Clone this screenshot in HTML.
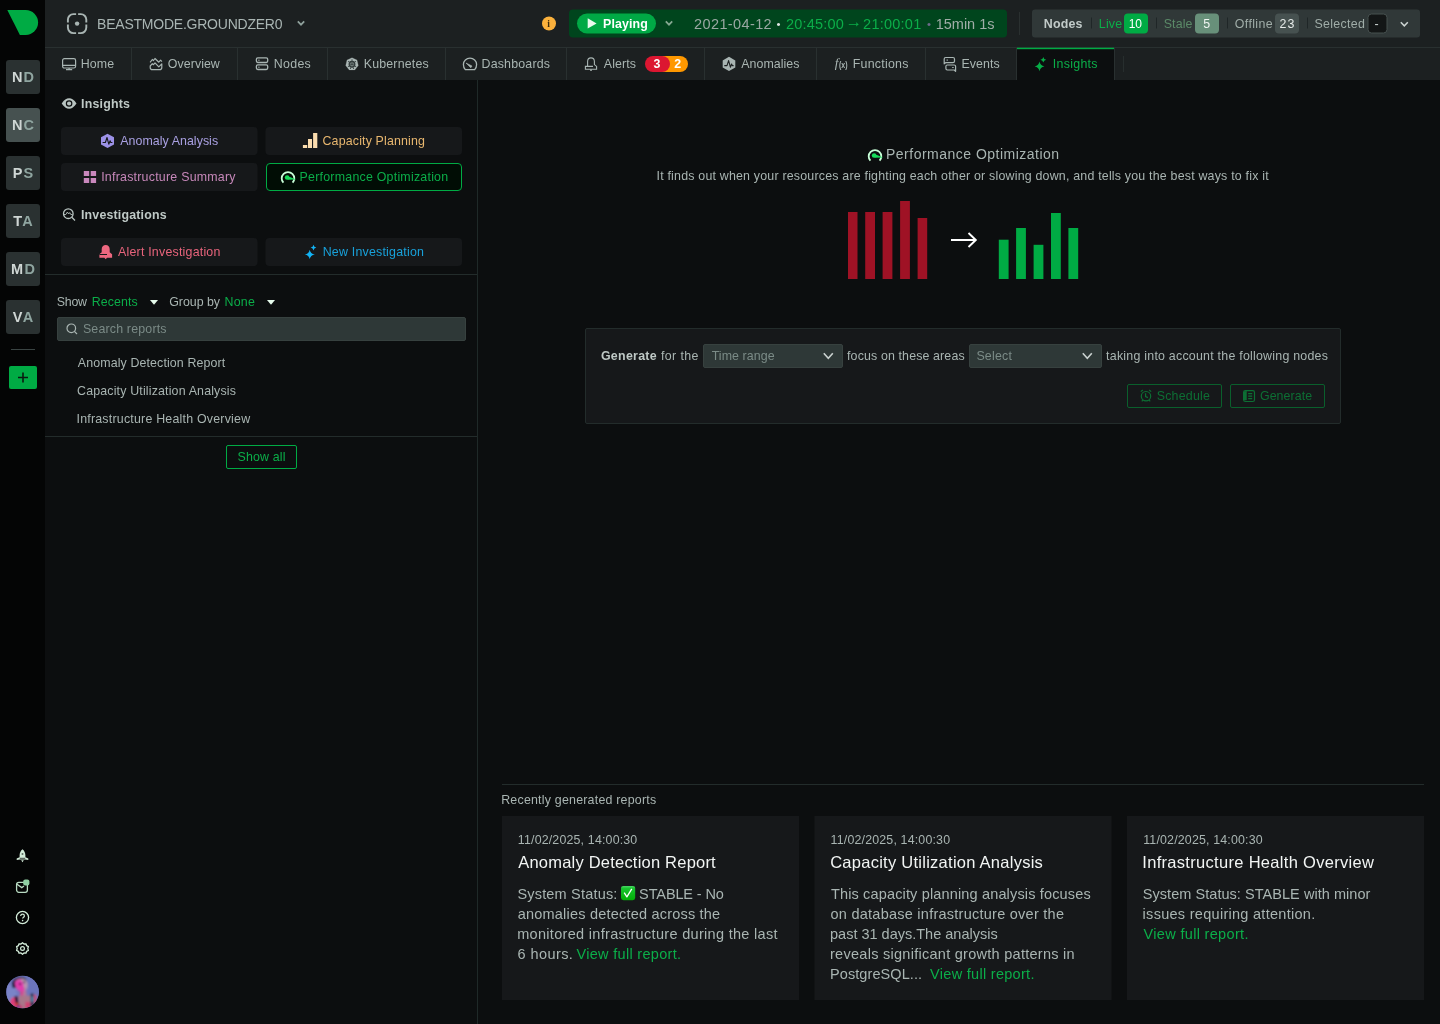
<!DOCTYPE html>
<html lang="en">
<head>
<meta charset="utf-8">
<title>Insights - Performance Optimization</title>
<style>
*{box-sizing:border-box;margin:0;padding:0}
html,body{width:1440px;height:1024px;overflow:hidden;background:#0c0e0f}
body{font-family:"Liberation Sans",sans-serif;color:#b0bcb9;font-size:12px;position:relative}
.b{position:absolute}
.t{position:absolute;white-space:pre;line-height:1}
svg{position:absolute;overflow:visible}
</style>
</head>
<body>
<div id="root" style="position:absolute;left:0;top:0;width:1440px;height:1024px;will-change:transform">
<!-- ===== left rail ===== -->
<div class="b" style="left:0;top:0;width:45px;height:1024px;background:#040505"></div>
<svg style="left:0;top:0" width="45" height="47" viewBox="0 0 45 47"><path d="M7.300 10.100H25.700A12.400 12.400 0 0 1 25.700 34.900H19.900Z" fill="#00ab44"/></svg>
<div class="b" style="left:6px;top:60px;width:34px;height:34px;border-radius:3px;background:#2a3131;text-align:center;font-weight:bold;font-size:14.5px;line-height:34px;letter-spacing:1.2px;padding-left:1.2px;color:#8fa5a0;white-space:nowrap"><span style="color:#cfd6d4">N</span>D</div>
<div class="b" style="left:6px;top:108px;width:34px;height:34px;border-radius:3px;background:#465150;text-align:center;font-weight:bold;font-size:14.5px;line-height:34px;letter-spacing:1.2px;padding-left:1.2px;color:#8fa5a0;white-space:nowrap"><span style="color:#cfd6d4">N</span>C</div>
<div class="b" style="left:6px;top:156px;width:34px;height:34px;border-radius:3px;background:#2a3131;text-align:center;font-weight:bold;font-size:14.5px;line-height:34px;letter-spacing:1.2px;padding-left:1.2px;color:#8fa5a0;white-space:nowrap"><span style="color:#cfd6d4">P</span>S</div>
<div class="b" style="left:6px;top:204px;width:34px;height:34px;border-radius:3px;background:#2a3131;text-align:center;font-weight:bold;font-size:14.5px;line-height:34px;letter-spacing:1.2px;padding-left:1.2px;color:#8fa5a0;white-space:nowrap"><span style="color:#cfd6d4">T</span>A</div>
<div class="b" style="left:6px;top:252px;width:34px;height:34px;border-radius:3px;background:#2a3131;text-align:center;font-weight:bold;font-size:14.5px;line-height:34px;letter-spacing:1.2px;padding-left:1.2px;color:#8fa5a0;white-space:nowrap"><span style="color:#cfd6d4">M</span>D</div>
<div class="b" style="left:6px;top:300px;width:34px;height:34px;border-radius:3px;background:#2a3131;text-align:center;font-weight:bold;font-size:14.5px;line-height:34px;letter-spacing:1.2px;padding-left:1.2px;color:#8fa5a0;white-space:nowrap"><span style="color:#cfd6d4">V</span>A</div>
<div class="b" style="left:11px;top:349px;width:24px;height:1px;background:#3a4443"></div>
<div class="b" style="left:9px;top:366px;width:28px;height:23px;border-radius:2px;background:#00ab44"></div>
<svg style="left:9px;top:366px" width="28" height="23" viewBox="0 0 28 23"><path d="M14 6.5V16.5M9 11.5H19" stroke="#0a1a10" stroke-width="1.6" fill="none"/></svg>
<!-- rail bottom icons -->
<svg style="left:14px;top:848px" width="17" height="16" viewBox="0 0 17 16"><path d="M8.5 1.3C10.6 3 11.4 5.2 11.4 7.6V9.3L14.3 10.6V12L11.2 11.6H5.8L2.7 12V10.6L5.6 9.3V7.6C5.6 5.2 6.4 3 8.5 1.3Z M7.2 12.3H9.8L8.5 14.2Z" fill="#d3ecd9"/><circle cx="8.5" cy="6" r="1" fill="#5a6a60"/><path d="M5.8 10.3H11.2" stroke="#040505" stroke-width=".7"/></svg>
<svg style="left:15px;top:878px" width="16" height="16" viewBox="0 0 16 16"><rect x="1.6" y="4.3" width="10.8" height="10" rx="2.2" fill="none" stroke="#b9dcc3" stroke-width="1.3"/><path d="M2 6.2L6.8 9.6L9 8" fill="none" stroke="#b9dcc3" stroke-width="1.3"/><rect x="8.2" y="1.4" width="6.2" height="6" rx="2" fill="#8fd0a3"/></svg>
<svg style="left:15px;top:910px" width="15" height="15" viewBox="0 0 15 15"><circle cx="7.5" cy="7.5" r="6.1" fill="none" stroke="#d3ecd9" stroke-width="1.3"/><path d="M5.7 6.1C5.7 4.9 6.5 4.2 7.6 4.2S9.4 4.9 9.4 5.9C9.4 7.2 7.6 7.2 7.6 8.6" fill="none" stroke="#d3ecd9" stroke-width="1.2"/><circle cx="7.6" cy="10.6" r=".8" fill="#d3ecd9"/></svg>
<svg style="left:15px;top:941px" width="15" height="15" viewBox="0 0 15 15"><path d="M7.5 1.2L9 2.5L11 2.3L11.6 4.2L13.4 5.1L12.8 7L13.4 8.9L11.6 9.8L11 11.7L9 11.5L7.5 12.8L6 11.5L4 11.7L3.4 9.8L1.6 8.9L2.2 7L1.6 5.1L3.4 4.2L4 2.3L6 2.5Z" transform="translate(0 .5)" fill="none" stroke="#d3ecd9" stroke-width="1.3" stroke-linejoin="round"/><circle cx="7.5" cy="7.5" r="1.9" fill="none" stroke="#d3ecd9" stroke-width="1.2"/></svg>
<!-- avatar -->
<svg style="left:6px;top:975px" width="34" height="34" viewBox="0 0 34 34"><defs><clipPath id="av"><circle cx="16.550" cy="16.950" r="16.300"/></clipPath><filter id="avb" x="-20%" y="-20%" width="140%" height="140%"><feGaussianBlur stdDeviation="1.1"/></filter></defs><g clip-path="url(#av)"><rect width="34" height="34" fill="#6f77be"/><g filter="url(#avb)"><path d="M0 8L9 12L12 22L3 28L0 30Z" fill="#7a84c8"/><path d="M19 0H34V22L24 18L21 8Z" fill="#6c74bc"/><path d="M6.200 12.800C5.800 8 6.800 5 10.200 3C13 1.600 17 1.800 19.500 3C20.600 4.500 20.600 6.500 20.300 7.600L17.300 5.200L10.500 6.500L10.200 13Z" fill="#1f1838"/><path d="M9.200 7C10 4.500 13 3.400 16 3.600C19.500 4 21.600 6.500 21.700 10C21.800 13.500 20 16.600 16.500 16.800C12.500 17 9 13 9.200 7Z" fill="#b795ae"/><path d="M9.200 7C10 5 12.500 4.200 15 4.500L17.500 9L18.500 16.500C16 17.500 12.500 16.500 10.500 13.500C9.300 11.500 9 9 9.200 7Z" fill="#e03cae"/><circle cx="14" cy="9.100" r="1.050" fill="#2a1838"/><circle cx="18.200" cy="7.200" r=".95" fill="#2c2040"/><path d="M17.500 13.800L19.300 13.300L19 14.600Z" fill="#a03070"/><path d="M14 16L20.300 16.300L20.300 21.500H14Z" fill="#cc4c92"/><path d="M17.500 16.500H20.300V21.500H17.500Z" fill="#b0809c"/><path d="M3.900 30C3.500 25 6 22 9.100 21.800L12 21.500L13 34H5Z" fill="#de3f7a"/><path d="M12.800 20.600H24.700V34H12.800Z" fill="#a9788a"/><path d="M19.500 26.500L24.700 27.500V34H19Z" fill="#cf4272"/><path d="M13 29L16.500 31V34H13Z" fill="#c04a78"/><path d="M8.400 21.300L11.200 20.800L13.400 32.500L10.200 32Z" fill="#1a1430"/><path d="M9.300 28L12 27.600L13.200 32.600L10.200 32.200Z" fill="#d8431f"/><path d="M10.600 30.600L12.600 30.300L13.200 32.700L11.200 32.600Z" fill="#4834c4"/><path d="M24.700 18.200L27.700 18.800V30.700L24.700 32Z" fill="#1a2a44"/><path d="M25.500 21.200L27 21.500V26.800L25.500 27Z" fill="#2f9dc0"/><path d="M27.700 19L30.700 20.500V27.700L27.700 29Z" fill="#c2527f"/></g></g></svg>
<!-- ===== header ===== -->
<div class="b" style="left:45px;top:0;width:1395px;height:80px;background:#1c2021"></div>
<div class="b" style="left:45px;top:47px;width:1395px;height:1px;background:#293030"></div>
<!-- workspace icon -->
<svg style="left:66px;top:13px" width="22" height="22" viewBox="0 0 22 22"><rect x="1.9" y="1.1" width="18.4" height="19" rx="5.5" fill="none" stroke="#a9b5b3" stroke-width="1.9"/><path d="M11.1 0V22M0 10.6H22" stroke="#1c2021" stroke-width="2"/><circle cx="11.1" cy="10.6" r="2.2" fill="#a9b5b3"/></svg>
<svg style="left:297px;top:20px" width="8" height="7" viewBox="0 0 8 7"><path d="M.8 1.3L4 4.7L7.2 1.3" fill="none" stroke="#8fa19c" stroke-width="1.7"/></svg>
<!-- info -->
<svg style="left:541px;top:15px" width="16" height="17"><rect x="1" y="1.5" width="14" height="14" rx="7" fill="#fbb13c"/></svg>
<!-- play bar -->
<svg style="left:568px;top:8px" width="440" height="31"><rect x="1" y="1.5" width="438" height="28" rx="4" fill="#00451d"/></svg>
<svg style="left:576px;top:12px" width="81" height="23"><rect x="1" y="1.5" width="79" height="20" rx="10" fill="#00a945"/></svg>
<svg style="left:587px;top:18px" width="11" height="11" viewBox="0 0 11 11"><path d="M.7 .3L9.6 5.4L.7 10.5Z" fill="#e9fbee"/></svg>
<svg style="left:665px;top:20px" width="8" height="7" viewBox="0 0 8 7"><path d="M.8 1.3L4 4.7L7.2 1.3" fill="none" stroke="#86a892" stroke-width="1.7"/></svg>
<div class="b" style="left:1019px;top:12px;width:1px;height:23px;background:#2a3030"></div>
<!-- nodes bar -->
<svg style="left:1031px;top:8px" width="390" height="31"><rect x="1" y="1.5" width="388" height="28" rx="3" fill="#303838"/></svg>
<svg style="left:1090px;top:16px" width="3" height="14"><rect x="1" y="1.5" width="1" height="11" rx="0" fill="#1f2627"/></svg>
<svg style="left:1155px;top:16px" width="3" height="14"><rect x="1" y="1.5" width="1" height="11" rx="0" fill="#1f2627"/></svg>
<svg style="left:1226px;top:16px" width="3" height="14"><rect x="1" y="1.5" width="1" height="11" rx="0" fill="#1f2627"/></svg>
<svg style="left:1306px;top:16px" width="3" height="14"><rect x="1" y="1.5" width="1" height="11" rx="0" fill="#1f2627"/></svg>
<svg style="left:1123px;top:12px" width="26" height="23"><rect x="1" y="1.5" width="24" height="20" rx="4" fill="#00ab44"/></svg>
<svg style="left:1194px;top:12px" width="26" height="23"><rect x="1" y="1.5" width="24" height="20" rx="4" fill="#68907a"/></svg>
<svg style="left:1274px;top:12px" width="26" height="23"><rect x="1" y="1.5" width="24" height="20" rx="4" fill="#465150"/></svg>
<svg style="left:1366px;top:12px" width="23" height="23"><rect x="2" y="2" width="19" height="19" rx="3.5" fill="#131616" stroke="#46504f"/></svg>
<svg style="left:1400px;top:21px" width="9" height="7" viewBox="0 0 9 7"><path d="M.8 1.2L4.3 4.8L7.8 1.2" fill="none" stroke="#cdd5d3" stroke-width="1.5"/></svg>
<!-- ===== tabs ===== -->
<div class="b" style="left:131px;top:48px;width:1px;height:32px;background:#293030"></div>
<div class="b" style="left:237px;top:48px;width:1px;height:32px;background:#293030"></div>
<div class="b" style="left:327px;top:48px;width:1px;height:32px;background:#293030"></div>
<div class="b" style="left:445px;top:48px;width:1px;height:32px;background:#293030"></div>
<div class="b" style="left:566px;top:48px;width:1px;height:32px;background:#293030"></div>
<div class="b" style="left:704px;top:48px;width:1px;height:32px;background:#293030"></div>
<div class="b" style="left:816px;top:48px;width:1px;height:32px;background:#293030"></div>
<div class="b" style="left:925px;top:48px;width:1px;height:32px;background:#293030"></div>
<div class="b" style="left:1016px;top:48px;width:99px;height:32px;background:#0c0e0f;border-left:1px solid #293030;border-right:1px solid #293030"></div>
<svg style="left:1016px;top:46px" width="99" height="5"><rect x="1" y="1.7" width="97" height="1.5" rx="0" fill="#00ab44"/></svg>
<div class="b" style="left:1123px;top:56px;width:1px;height:16px;background:#272e2e"></div>
<!-- alerts pill -->
<div class="b" style="left:655px;top:56px;width:33px;height:16px;border-radius:8px;background:#ff9800"></div>
<div class="b" style="left:645px;top:56px;width:25px;height:16px;border-radius:8px;background:#dc1631"></div>
<!-- ===== left panel ===== -->
<div class="b" style="left:477px;top:80px;width:1px;height:944px;background:#1f2928"></div>
<svg style="left:60px;top:126px" width="199" height="30"><rect x="1" y="1" width="196.5" height="28" rx="4" fill="#16181a"/></svg>
<svg style="left:264px;top:126px" width="199" height="30"><rect x="1.5" y="1" width="196.5" height="28" rx="4" fill="#16181a"/></svg>
<svg style="left:60px;top:162px" width="199" height="30"><rect x="1" y="1" width="196.5" height="28" rx="4" fill="#16181a"/></svg>
<svg style="left:264px;top:162px" width="199" height="30"><rect x="2.500" y="1.500" width="195" height="27" rx="3.500" fill="#010d05" stroke="#00ab44"/></svg>
<svg style="left:60px;top:237px" width="199" height="30"><rect x="1" y="1" width="196.5" height="28" rx="4" fill="#16181a"/></svg>
<svg style="left:264px;top:237px" width="199" height="30"><rect x="1.5" y="1" width="196.5" height="28" rx="4" fill="#16181a"/></svg>
<div class="b" style="left:45px;top:274px;width:432px;height:1px;background:#232c2b"></div>
<svg style="left:149.5px;top:299.5px" width="8" height="5" viewBox="0 0 8 5"><path d="M0 0H8L4 4.7Z" fill="#e6fbec"/></svg>
<svg style="left:266.5px;top:299.5px" width="8" height="5" viewBox="0 0 8 5"><path d="M0 0H8L4 4.7Z" fill="#e6fbec"/></svg>
<div class="b" style="left:57px;top:317px;width:409px;height:24px;border-radius:2px;background:#2e3837;border:1px solid #37413f"></div>
<svg style="left:66px;top:323px" width="12" height="12" viewBox="0 0 12 12"><circle cx="5.3" cy="5.3" r="4.3" fill="none" stroke="#aab6b3" stroke-width="1.2"/><path d="M8.4 8.4L11 11" stroke="#aab6b3" stroke-width="1.2"/></svg>
<div class="b" style="left:45px;top:436px;width:432px;height:1px;background:#232c2b"></div>
<div class="b" style="left:226px;top:445px;width:71px;height:24px;border-radius:2px;border:1px solid #00ab44"></div>
<!-- ===== main ===== -->
<svg style="left:840px;top:195px" width="250" height="90" viewBox="840 195 250 90">
<g fill="#9f1225"><rect x="848" y="212" width="9.500" height="67"/><rect x="865.2" y="212" width="9.8" height="67"/><rect x="882.6" y="212" width="9.8" height="67"/><rect x="900.1" y="201" width="9.8" height="78"/><rect x="917.600" y="218" width="9.600" height="61"/></g>
<path d="M951 240H975.5M968.5 233L975.8 240L968.5 247" fill="none" stroke="#ffffff" stroke-width="1.9"/>
<g fill="#00ab44"><rect x="998.8" y="239.7" width="9.8" height="39.3"/><rect x="1016.1" y="228" width="9.8" height="51"/><rect x="1033.6" y="244.8" width="9.8" height="34.2"/><rect x="1051" y="213" width="9.8" height="66"/><rect x="1068.4" y="228" width="9.8" height="51"/></g>
</svg>
<div class="b" style="left:585px;top:328px;width:756px;height:96px;border-radius:2px;background:#16181a;border:1px solid #232c2b"></div>
<div class="b" style="left:703px;top:344px;width:140px;height:24px;border-radius:2px;background:#2e3837;border:1px solid #37413f"></div>
<div class="b" style="left:969px;top:344px;width:133px;height:24px;border-radius:2px;background:#2e3837;border:1px solid #37413f"></div>
<svg style="left:823px;top:352px" width="11" height="8" viewBox="0 0 11 8"><path d="M.8 1.2L5.3 6.2L9.8 1.2" fill="none" stroke="#c9d1cf" stroke-width="1.6"/></svg>
<svg style="left:1082px;top:352px" width="11" height="8" viewBox="0 0 11 8"><path d="M.8 1.2L5.3 6.2L9.8 1.2" fill="none" stroke="#c9d1cf" stroke-width="1.6"/></svg>
<div class="b" style="left:1127px;top:384px;width:95px;height:24px;border-radius:2px;border:1px solid #0a5f2c"></div>
<div class="b" style="left:1230px;top:384px;width:95px;height:24px;border-radius:2px;border:1px solid #0a5f2c"></div>
<div class="b" style="left:502px;top:784px;width:922px;height:1px;background:#232c2b"></div>
<div class="b" style="left:502px;top:816px;width:297px;height:184px;background:#16181a"></div>
<svg style="left:813px;top:815px" width="300" height="186"><rect x="1.5" y="1" width="297" height="184" rx="0" fill="#16181a"/></svg>
<div class="b" style="left:1127px;top:816px;width:297px;height:184px;background:#16181a"></div>
<!-- check emoji -->
<svg style="left:621px;top:885.8px" width="14.2" height="14.3" viewBox="0 0 14.2 14.3"><defs><linearGradient id="ck" x1="0" y1="0" x2="0" y2="1"><stop offset="0" stop-color="#4bd866"/><stop offset=".18" stop-color="#17c42e"/><stop offset="1" stop-color="#02ad06"/></linearGradient></defs><rect x="0" y="0" width="14.2" height="14.3" rx="2.500" fill="url(#ck)"/><path d="M3.200 6.700L5.900 10.900L10.800 2.800" fill="none" stroke="#ffffff" stroke-width="1.300" stroke-linejoin="round"/></svg>
<!-- ===== tab icons ===== -->
<svg style="left:62px;top:58px" width="15" height="13" viewBox="0 0 15 13" fill="none" stroke="#a9b5b3" stroke-width="1.2"><rect x=".6" y=".6" width="13" height="9.4" rx="1.8"/><path d="M.6 7.4H13.6M7.1 10V11.5M4 11.7H10.2"/></svg>
<svg style="left:149px;top:57px" width="15" height="14" viewBox="149 57 15 14" fill="none" stroke="#a9b5b3" stroke-width="1.2" stroke-linejoin="round"><path d="M150.100 62.300L152.300 59.500L153.500 60.500L155 58.500L158.800 62.200L160.600 60.200L161.900 61.600"/><path d="M150.200 66V67.400C150.200 68.800 151.200 69.600 152.500 69.600H159.500C160.800 69.600 161.800 68.800 161.800 67.400V63.800L158.800 66.800L155 62.900L153.500 64.700L152.300 63.700L150.200 66Z"/></svg>
<svg style="left:255px;top:57px" width="14" height="14" viewBox="255 57 14 14" fill="none" stroke="#a9b5b3" stroke-width="1.3"><rect x="256.4" y="57.8" width="11.3" height="4.7" rx="1.4"/><rect x="256.4" y="64.8" width="11.3" height="4.7" rx="1.4"/><path d="M258.2 60.2H259.6M258.2 67.2H259.6" stroke-width="1"/></svg>
<svg style="left:345px;top:57px" width="14" height="14" viewBox="345 57 14 14"><path d="M352 57.700L357 60.100L358.300 65.500L354.800 69.900H349.200L345.700 65.500L347 60.100Z" fill="#a9b5b3" stroke="#a9b5b3" stroke-width=".2" stroke-linejoin="round"/><circle cx="352" cy="64.300" r="2.800" fill="#707c7a" stroke="#323b3b" stroke-width="1.300"/><path d="M350.600 64.600Q352 63.300 353.400 64.600" fill="none" stroke="#2b3333" stroke-width="1"/><path d="M352 59.300V61.300M348 61.200L349.700 62.500M356 61.200L354.300 62.500M347.800 66.900L349.400 66M356.200 66.900L354.600 66M350.300 69L351 67.300M353.700 69L353 67.300" stroke="#3a4444" stroke-width=".9"/></svg>
<svg style="left:462px;top:57px" width="16" height="14" viewBox="462 57 16 14" fill="none" stroke="#a9b5b3" stroke-width="1.3"><path d="M465.3 69.6H474.7C475.9 68.4 476.6 66.5 476.6 64.6C476.6 61 473.6 58.2 470 58.2S463.4 61 463.4 64.6C463.4 66.5 464.1 68.4 465.3 69.6Z"/><path d="M466 63L472 66L470.8 67.8Z" fill="#a9b5b3" stroke-width=".6"/></svg>
<svg style="left:584px;top:56px" width="14" height="16" viewBox="584 56 14 16" fill="none" stroke="#a9b5b3" stroke-width="1.1"><path d="M587.6 65.8V61.6C587.6 59.4 589 57.9 591 57.9S594.4 59.4 594.4 61.6V64.6L596.6 66.4V69.3H585.4V66.4H593"/><path d="M590 70.2H592" stroke-width="1.3"/></svg>
<svg style="left:722px;top:56px" width="14" height="16" viewBox="722 56 14 16"><path d="M729 56.8L735.3 60.4V67.5L729 71.1L722.7 67.5V60.4Z" fill="#a9b5b3"/><path d="M724.3 65.6H727L728.6 60.6L730.4 67.2L731.6 64L732.3 65.6H733.6" fill="none" stroke="#1c2021" stroke-width="1.1" stroke-linejoin="round"/></svg>
<svg style="left:943px;top:56px" width="14" height="16" viewBox="943 56 14 16" fill="none" stroke="#a9b5b3" stroke-width="1.2" stroke-linejoin="round"><path d="M944.2 63.8V58.9C944.2 58 944.9 57.5 945.7 57.5H953C953.9 57.5 954.5 58.1 954.5 58.9V61.3C954.5 62.2 953.9 62.7 953 62.7H945.6Z"/><path d="M955.6 71.3V66.3C955.6 65.5 955 65 954.2 65H947.3C946.4 65 945.9 65.6 945.9 66.3V68.6C945.9 69.5 946.5 70 947.3 70H954.2Z"/><path d="M946.5 60.1H948M952.2 67.5H953.7" stroke-width="1"/></svg>
<svg style="left:1034px;top:56px" width="14" height="16" viewBox="1034 56 14 16" fill="#06ad47"><path d="M1039.5 61.6Q1040.2 65.7 1044.4 66.4Q1040.2 67.100 1039.500 71.2Q1038.8 67.1 1034.7 66.4Q1038.8 65.7 1039.5 61.6Z"/><path d="M1043.3 56.900Q1043.700 59.3 1046.200 59.700Q1043.700 60.100 1043.300 62.500Q1042.900 60.100 1040.400 59.700Q1042.900 59.300 1043.300 56.900Z"/></svg>
<!-- ===== left panel icons ===== -->
<svg style="left:61px;top:98px" width="16" height="11" viewBox="61 98 16 11"><path d="M61.700 103.500C64 99.800 66.600 98.300 69.100 98.300S74.200 99.800 76.500 103.500C74.200 107.200 71.600 108.700 69.100 108.700S64 107.200 61.700 103.500Z" fill="#b8c3c0"/><circle cx="69.100" cy="103.500" r="2.700" fill="none" stroke="#0c0e0f" stroke-width="1.200"/></svg>
<svg style="left:101px;top:133px" width="14" height="16" viewBox="101 133 14 16"><path d="M107.500 133.700L114 137.300V144.400L107.500 148L101 144.400V137.300Z" fill="#9d92e8"/><path d="M102.600 142.500H105.400L107 137.500L108.800 144.200L110.100 140.800L110.800 142.500H112.400" fill="none" stroke="#16191a" stroke-width="1.100" stroke-linejoin="round"/></svg>
<svg style="left:302px;top:133px" width="16" height="16" viewBox="302 133 16 16" fill="#fbdcae"><rect x="302.900" y="145" width="4.300" height="3"/><rect x="308" y="139" width="4" height="9"/><rect x="313.100" y="133" width="4.200" height="15"/></svg>
<svg style="left:83px;top:171px" width="14" height="13" viewBox="83 171 14 13" fill="#c987bc"><rect x="83.800" y="171" width="5.400" height="5"/><rect x="90.700" y="171" width="5.400" height="5"/><rect x="83.800" y="178" width="5.400" height="5"/><rect x="90.700" y="178" width="5.400" height="5"/></svg>
<svg style="left:280px;top:170px" width="17" height="14" viewBox="280 170 17 14"><path d="M283.400 182.700A6.300 6.300 0 1 1 292.600 182.700" fill="none" stroke="#c8ffd8" stroke-width="1.800"/><circle cx="287.100" cy="177.500" r="2.300" fill="#17dd5b"/><path d="M288 176.200L296.200 179.500L287.500 179.800Z" fill="#17dd5b"/></svg>
<svg style="left:62px;top:208px" width="14" height="14" viewBox="62 208 14 14" fill="none" stroke="#b8c3c0" stroke-width="1.300"><circle cx="68.300" cy="213.700" r="4.800"/><path d="M71.800 217.300L75 220.500"/><path d="M64 214.500H65.800L67.400 212L68.600 214L69.700 212.600L70.800 214.500H72.500" stroke-width=".9" stroke-linejoin="round"/></svg>
<svg style="left:99px;top:244px" width="14" height="16" viewBox="99 244 14 16"><path d="M105.700 245C108.200 245 109.700 246.800 109.700 249.300V252.300L112.100 254.300V257.700H107L105.700 259.200L104.400 257.700H99.400V254.300L101.700 252.300V249.300C101.700 246.800 103.200 245 105.700 245Z" fill="#ee6880"/><path d="M99.400 254.500H107" stroke="#16191a" stroke-width="1"/></svg>
<svg style="left:304px;top:244px" width="14" height="16" viewBox="304 244 14 16" fill="#12b3f5"><path d="M309.700 249.700Q310.400 253.700 314.900 254.400Q310.400 255.100 309.700 259.100Q309 255.100 304.800 254.400Q309 253.700 309.700 249.700Z"/><path d="M313.500 244.800Q313.900 247.200 316.300 247.600Q313.900 248 313.500 250.400Q313.100 248 310.700 247.600Q313.100 247.200 313.500 244.800Z"/></svg>
<!-- ===== main icons ===== -->
<svg style="left:867px;top:147.500px" width="17" height="14" viewBox="280 170 17 14"><path d="M283.400 182.700A6.300 6.300 0 1 1 292.600 182.700" fill="none" stroke="#c8ffd8" stroke-width="1.800"/><circle cx="287.100" cy="177.500" r="2.300" fill="#17dd5b"/><path d="M288 176.200L296.200 179.500L287.500 179.800Z" fill="#17dd5b"/></svg>
<svg style="left:1140px;top:389px" width="13" height="14" viewBox="1140 389 13 14" fill="none" stroke="#0d6f34" stroke-width="1.200"><circle cx="1146" cy="396.200" r="4.700"/><path d="M1145.600 393.300V396.500L1147.900 397.600M1140.800 391.600L1142.800 390M1151.200 391.600L1149.200 390M1142.800 400.200L1141.800 401.400M1149.200 400.200L1150.200 401.400"/></svg>
<svg style="left:1243px;top:390px" width="13" height="13" viewBox="1243 390 13 13" fill="none" stroke="#0d6f34" stroke-width="1.200"><rect x="1243.600" y="390.600" width="10.900" height="10.900" rx="1.800"/><path d="M1243.600 392V400H1246.400V391Z" fill="#0d6f34" stroke-width=".6"/><path d="M1248.200 393.700H1252.200M1248.200 396.100H1252.200M1248.200 398.600H1252.200"/></svg>

<span class="t" style="left:97.10px;top:17.00px;font-size:14px;color:#a9b5b3;letter-spacing:-0.232px;">BEASTMODE.GROUNDZER0</span>
<span class="t" style="left:603.09px;top:17.50px;font-size:12.4px;color:#ffffff;font-weight:700;letter-spacing:0.096px;">Playing</span>
<span class="t" style="left:694.12px;top:16.70px;font-size:14.5px;color:#9aa8a3;letter-spacing:0.376px;">2021-04-12</span>
<span class="t" style="left:776.61px;top:19.00px;font-size:11.5px;color:#dfe5e3;">•</span>
<span class="t" style="left:786.12px;top:16.70px;font-size:14.5px;color:#0bae49;letter-spacing:0.169px;">20:45:00</span>
<span class="t" style="left:845.52px;top:13.00px;font-size:16.5px;color:#0bae49;">→</span>
<span class="t" style="left:863.12px;top:16.70px;font-size:14.5px;color:#0bae49;letter-spacing:0.240px;">21:00:01</span>
<span class="t" style="left:927.11px;top:19.00px;font-size:11.5px;color:#6f6a8c;">•</span>
<span class="t" style="left:935.70px;top:16.70px;font-size:14.5px;color:#a0ada8;">15min 1s</span>
<span class="t" style="left:1043.79px;top:17.50px;font-size:12.4px;color:#c2cbc9;font-weight:700;letter-spacing:0.186px;">Nodes</span>
<span class="t" style="left:1098.80px;top:17.50px;font-size:12.4px;color:#0bae49;letter-spacing:0.200px;">Live</span>
<span class="t" style="left:1128.85px;top:17.50px;font-size:12px;color:#ffffff;letter-spacing:-0.150px;">10</span>
<span class="t" style="left:1163.69px;top:17.50px;font-size:12.4px;color:#5b8a68;letter-spacing:0.134px;">Stale</span>
<span class="t" style="left:1203.19px;top:17.50px;font-size:12.4px;color:#f0f5f2;">5</span>
<span class="t" style="left:1234.86px;top:17.50px;font-size:12.4px;color:#a0ada8;letter-spacing:0.358px;">Offline</span>
<span class="t" style="left:1279.54px;top:17.50px;font-size:12.4px;color:#e6ebe9;letter-spacing:1.010px;">23</span>
<span class="t" style="left:1314.49px;top:17.50px;font-size:12.4px;color:#a0ada8;letter-spacing:0.318px;">Selected</span>
<span class="t" style="left:1374.61px;top:17.50px;font-size:12.4px;color:#cdd5d3;">-</span>
<span class="t" style="left:80.70px;top:58.20px;font-size:12.4px;color:#a9b5b2;letter-spacing:0.108px;">Home</span>
<span class="t" style="left:167.86px;top:58.20px;font-size:12.4px;color:#a9b5b2;letter-spacing:0.045px;">Overview</span>
<span class="t" style="left:273.70px;top:58.20px;font-size:12.4px;color:#a9b5b2;letter-spacing:0.329px;">Nodes</span>
<span class="t" style="left:363.70px;top:58.20px;font-size:12.4px;color:#a9b5b2;letter-spacing:0.178px;">Kubernetes</span>
<span class="t" style="left:481.50px;top:58.20px;font-size:12.4px;color:#a9b5b2;letter-spacing:0.191px;">Dashboards</span>
<span class="t" style="left:603.80px;top:58.20px;font-size:12.4px;color:#a9b5b2;letter-spacing:0.083px;">Alerts</span>
<span class="t" style="left:653.56px;top:58.20px;font-size:12.4px;color:#ffffff;font-weight:700;">3</span>
<span class="t" style="left:674.30px;top:58.20px;font-size:12.4px;color:#ffffff;font-weight:700;">2</span>
<span class="t" style="left:741.30px;top:58.20px;font-size:12.4px;color:#a9b5b2;letter-spacing:0.036px;">Anomalies</span>
<span class="t" style="left:852.70px;top:58.20px;font-size:12.4px;color:#a9b5b2;letter-spacing:0.252px;">Functions</span>
<span class="t" style="left:961.50px;top:58.20px;font-size:12.4px;color:#a9b5b2;letter-spacing:0.077px;">Events</span>
<span class="t" style="left:1052.80px;top:58.20px;font-size:12.4px;color:#0bae49;letter-spacing:0.288px;">Insights</span>
<span class="t" style="left:80.98px;top:97.80px;font-size:12.4px;color:#bfc9c6;font-weight:700;letter-spacing:0.216px;">Insights</span>
<span class="t" style="left:120.30px;top:134.80px;font-size:12.4px;color:#a9a0e2;letter-spacing:0.048px;">Anomaly Analysis</span>
<span class="t" style="left:322.52px;top:134.80px;font-size:12.4px;color:#e8b76f;letter-spacing:0.159px;">Capacity Planning</span>
<span class="t" style="left:101.20px;top:170.80px;font-size:12.4px;color:#c687b9;letter-spacing:0.234px;">Infrastructure Summary</span>
<span class="t" style="left:299.60px;top:170.80px;font-size:12.4px;color:#0bae49;letter-spacing:0.230px;">Performance Optimization</span>
<span class="t" style="left:80.98px;top:208.50px;font-size:12.4px;color:#bfc9c6;font-weight:700;letter-spacing:0.178px;">Investigations</span>
<span class="t" style="left:118.00px;top:245.80px;font-size:12.4px;color:#e8647c;letter-spacing:0.215px;">Alert Investigation</span>
<span class="t" style="left:322.70px;top:245.80px;font-size:12.4px;color:#18a1da;letter-spacing:0.214px;">New Investigation</span>
<span class="t" style="left:56.69px;top:295.80px;font-size:12.4px;color:#a9b5b2;letter-spacing:-0.230px;">Show</span>
<span class="t" style="left:91.80px;top:295.80px;font-size:12.4px;color:#0bae49;letter-spacing:0.067px;">Recents</span>
<span class="t" style="left:169.21px;top:295.80px;font-size:12.4px;color:#a9b5b2;letter-spacing:-0.031px;">Group by</span>
<span class="t" style="left:224.50px;top:295.80px;font-size:12.4px;color:#0bae49;letter-spacing:0.233px;">None</span>
<span class="t" style="left:82.89px;top:323.00px;font-size:12.4px;color:#7b8b87;letter-spacing:0.185px;">Search reports</span>
<span class="t" style="left:77.80px;top:357.00px;font-size:12.4px;color:#a9b5b2;letter-spacing:0.122px;">Anomaly Detection Report</span>
<span class="t" style="left:77.02px;top:385.00px;font-size:12.4px;color:#a9b5b2;letter-spacing:0.167px;">Capacity Utilization Analysis</span>
<span class="t" style="left:76.50px;top:413.00px;font-size:12.4px;color:#a9b5b2;letter-spacing:0.216px;">Infrastructure Health Overview</span>
<span class="t" style="left:237.49px;top:451.20px;font-size:12.4px;color:#0bae49;letter-spacing:0.173px;">Show all</span>
<span class="t" style="left:886.00px;top:147.20px;font-size:14px;color:#a9b5b2;letter-spacing:0.491px;">Performance Optimization</span>
<span class="t" style="left:656.50px;top:170.00px;font-size:12.4px;color:#a9b5b2;letter-spacing:0.205px;">It finds out when your resources are fighting each other or slowing down, and tells you the best ways to fix it</span>
<span class="t" style="left:600.94px;top:350.00px;font-size:12.4px;color:#bfc9c6;font-weight:700;letter-spacing:0.288px;">Generate</span>
<span class="t" style="left:661.06px;top:350.00px;font-size:12.4px;color:#a9b5b2;letter-spacing:0.362px;">for the</span>
<span class="t" style="left:711.67px;top:350.00px;font-size:12.4px;color:#7b8b87;letter-spacing:0.084px;">Time range</span>
<span class="t" style="left:847.06px;top:350.00px;font-size:12.4px;color:#a9b5b2;letter-spacing:0.133px;">focus on these areas</span>
<span class="t" style="left:976.39px;top:350.00px;font-size:12.4px;color:#7b8b87;letter-spacing:0.234px;">Select</span>
<span class="t" style="left:1106.11px;top:350.00px;font-size:12.4px;color:#a9b5b2;letter-spacing:0.236px;">taking into account the following nodes</span>
<span class="t" style="left:1156.69px;top:390.20px;font-size:12.4px;color:#0d6f34;letter-spacing:0.216px;">Schedule</span>
<span class="t" style="left:1259.92px;top:390.20px;font-size:12.4px;color:#0d6f34;letter-spacing:0.084px;">Generate</span>
<span class="t" style="left:501.20px;top:794.20px;font-size:12.4px;color:#a9b5b2;letter-spacing:0.220px;">Recently generated reports</span>
<span class="t" style="left:517.83px;top:834.30px;font-size:12.4px;color:#a9b5b2;letter-spacing:0.169px;">11/02/2025, 14:00:30</span>
<span class="t" style="left:830.62px;top:834.30px;font-size:12.4px;color:#a9b5b2;letter-spacing:0.169px;">11/02/2025, 14:00:30</span>
<span class="t" style="left:1143.22px;top:834.30px;font-size:12.4px;color:#a9b5b2;letter-spacing:0.169px;">11/02/2025, 14:00:30</span>
<span class="t" style="left:518.20px;top:854.00px;font-size:16.5px;color:#f2f5f4;letter-spacing:0.214px;">Anomaly Detection Report</span>
<span class="t" style="left:830.20px;top:854.00px;font-size:16.5px;color:#f2f5f4;letter-spacing:0.259px;">Capacity Utilization Analysis</span>
<span class="t" style="left:1142.29px;top:854.00px;font-size:16.5px;color:#f2f5f4;letter-spacing:0.304px;">Infrastructure Health Overview</span>
<span class="t" style="left:517.42px;top:887.00px;font-size:14.5px;color:#a9b5b2;letter-spacing:0.188px;">System Status:</span>
<span class="t" style="left:639.12px;top:887.00px;font-size:14.5px;color:#a9b5b2;letter-spacing:-0.119px;">STABLE - No</span>
<span class="t" style="left:517.72px;top:907.00px;font-size:14.5px;color:#a9b5b2;letter-spacing:0.207px;">anomalies detected across the</span>
<span class="t" style="left:517.20px;top:927.00px;font-size:14.5px;color:#a9b5b2;letter-spacing:0.312px;">monitored infrastructure during the last</span>
<span class="t" style="left:517.57px;top:947.00px;font-size:14.5px;color:#a9b5b2;letter-spacing:0.419px;">6 hours.</span>
<span class="t" style="left:576.48px;top:947.00px;font-size:14.5px;color:#0bae49;letter-spacing:0.304px;">View full report.</span>
<span class="t" style="left:830.91px;top:887.00px;font-size:14.5px;color:#a9b5b2;letter-spacing:0.154px;">This capacity planning analysis focuses</span>
<span class="t" style="left:830.50px;top:907.00px;font-size:14.5px;color:#a9b5b2;letter-spacing:0.252px;">on database infrastructure over the</span>
<span class="t" style="left:830.00px;top:927.00px;font-size:14.5px;color:#a9b5b2;">past 31 days.The analysis</span>
<span class="t" style="left:830.00px;top:947.00px;font-size:14.5px;color:#a9b5b2;letter-spacing:0.274px;">reveals significant growth patterns in</span>
<span class="t" style="left:830.00px;top:967.00px;font-size:14.5px;color:#a9b5b2;letter-spacing:0.088px;">PostgreSQL...</span>
<span class="t" style="left:930.08px;top:967.00px;font-size:14.5px;color:#0bae49;letter-spacing:0.292px;">View full report.</span>
<span class="t" style="left:1142.81px;top:887.00px;font-size:14.5px;color:#a9b5b2;letter-spacing:0.045px;">System Status: STABLE with minor</span>
<span class="t" style="left:1142.60px;top:907.00px;font-size:14.5px;color:#a9b5b2;letter-spacing:0.285px;">issues requiring attention.</span>
<span class="t" style="left:1143.58px;top:927.00px;font-size:14.5px;color:#0bae49;letter-spacing:0.323px;">View full report.</span>
<span class="t" style="left:834.80px;top:56.30px;font-size:13.4px;color:#a9b5b3;font-style:italic;font-family:'Liberation Serif',serif;">f</span>
<span class="t" style="left:838.95px;top:60.60px;font-size:9px;color:#a9b5b3;font-weight:700;transform:scaleX(.78);transform-origin:0 0;">(x)</span>
<span class="t" style="left:547.31px;top:20.20px;font-size:9.5px;color:#3d2b0a;font-weight:700;font-family:'Liberation Serif',serif;">i</span>
</div>
</body>
</html>
